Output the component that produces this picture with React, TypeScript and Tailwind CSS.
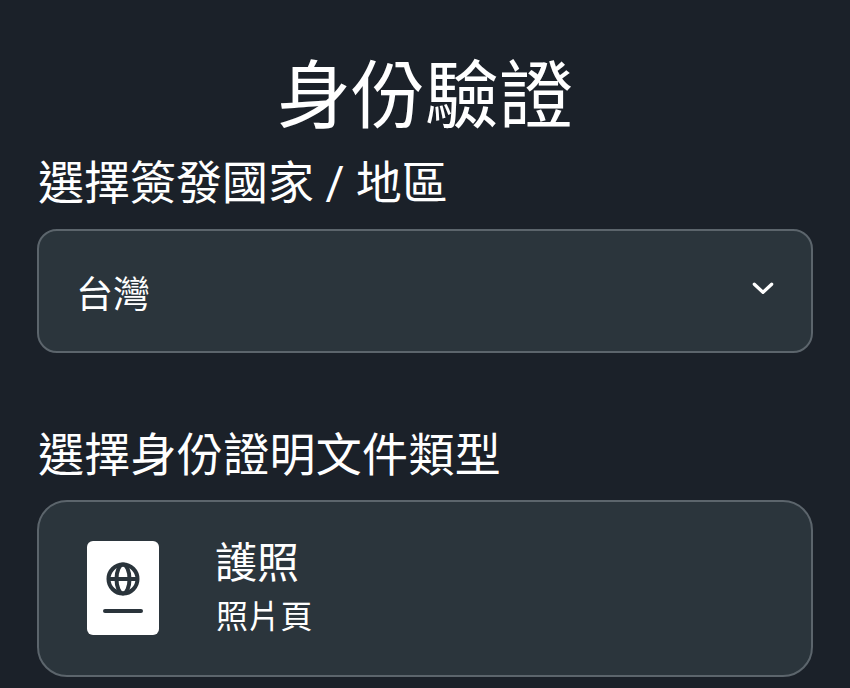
const cjk = "font-['Roboto','Noto_Sans_CJK_TC','Noto_Sans_CJK_JP',sans-serif]";

const PassportIcon = () => (
    <svg viewBox="0 0 72 94" className="mb-[2px] h-[94px] w-[72px] shrink-0">
        <rect width="72" height="94" rx="6" fill="#ffffff" />
        <g fill="none" stroke="#2a343b" strokeWidth="4">
            <circle cx="36" cy="38" r="14.5" />
            <ellipse cx="36" cy="38" rx="6.5" ry="14.5" />
            <path d="M21 38h30" />
        </g>
        <path d="M18 70h36" stroke="#2a343b" strokeWidth="4" strokeLinecap="round" />
    </svg>
);

export default function App() {
    return (
        <div className={`${cjk} h-[688px] w-[850px] overflow-hidden bg-[#1b2129] px-[37px] text-white`}>
            <h1 className="pt-[53px] text-center text-[74px] leading-[88px] font-normal">身份驗證</h1>
            <div className="mt-[18px] pl-px text-[46px] leading-[48px]">選擇簽發國家 / 地區</div>

            <div className="mt-[22px] flex h-[124px] items-center justify-between rounded-[20px] border-2 border-[#5c656c] bg-[#2b353c] pr-[35px] pl-[37px]">
                <span className="mt-[9px] text-[37px] leading-none">台灣</span>
                <svg viewBox="0 0 24 24" className="mb-[6px] h-[26px] w-[26px]" fill="none" stroke="#ffffff" strokeWidth="3" strokeLinecap="round" strokeLinejoin="round">
                    <path d="M4 8.5l8 7.5 8-7.5" />
                </svg>
            </div>

            <div className="mt-[78px] pl-px text-[46px] leading-[48px] tracking-[0.3px]">選擇身份證明文件類型</div>

            <div className="mt-[21px] flex h-[177px] items-center gap-[56px] rounded-[30px] border-2 border-[#5c656c] bg-[#2b353c] pl-[48px]">
                <PassportIcon />
                <div className="flex flex-col">
                    <span className="text-[42px] leading-[48px]">護照</span>
                    <span className="mt-[9px] pl-px text-[32px] leading-[40px] tracking-[0.3px]">照片頁</span>
                </div>
            </div>
        </div>
    );
}
